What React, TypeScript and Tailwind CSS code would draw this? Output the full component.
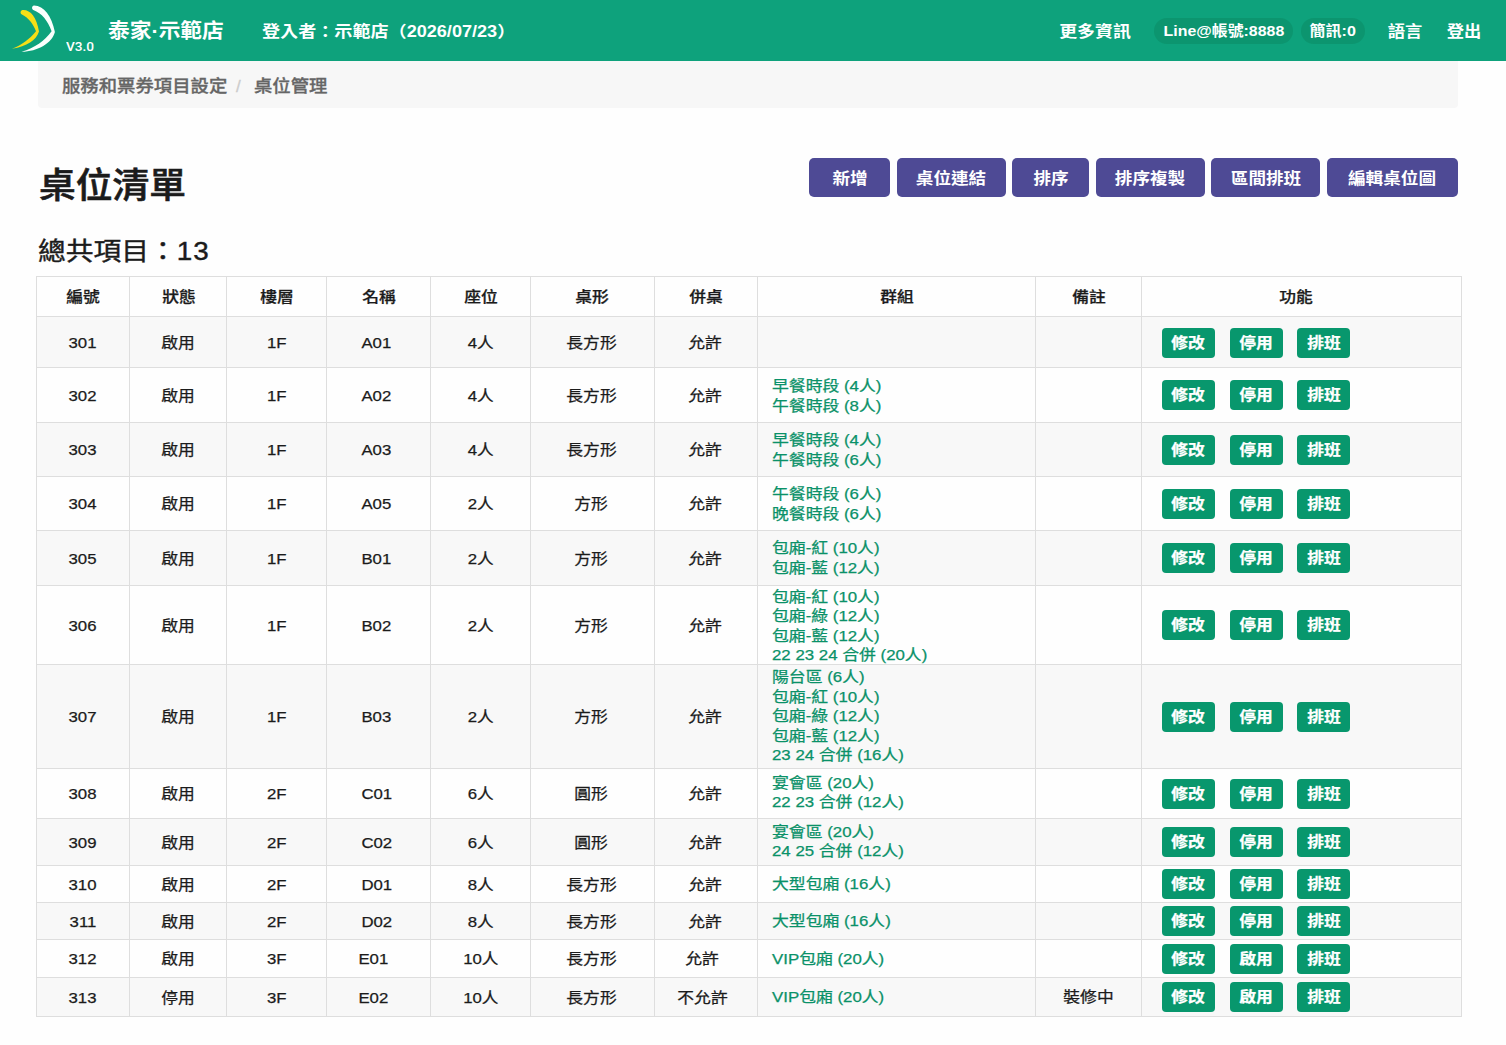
import React from 'react';
import clsx from 'clsx';

interface TableRow {
  id: string;
  status: string;
  floor: string;
  name: string;
  seats: string;
  shape: string;
  merge: string;
  groups: string[];
  note?: string;
  toggle: string;
  height: string;
  leading?: string;
}

const columns = [
  { label: '編號', width: 'w-[93px]' },
  { label: '狀態', width: 'w-[97px] pl-[3px]' },
  { label: '樓層', width: 'w-[100px] pl-0.5' },
  { label: '名稱', width: 'w-[104px] pl-0.5' },
  { label: '座位', width: 'w-[100px] pl-0.5' },
  { label: '桌形', width: 'w-[124px]' },
  { label: '併桌', width: 'w-[103px]' },
  { label: '群組', width: 'w-[278px] pl-0.5' },
  { label: '備註', width: 'w-[106px] pl-0.5' },
  { label: '功能', width: 'w-[320px] pr-2.5' },
];

const rows: TableRow[] = [
  { id: '301', status: '啟用', floor: '1F', name: 'A01', seats: '4人', shape: '長方形', merge: '允許', groups: [], toggle: '停用', height: 'h-[51px]' },
  { id: '302', status: '啟用', floor: '1F', name: 'A02', seats: '4人', shape: '長方形', merge: '允許', groups: ['早餐時段 (4人)', '午餐時段 (8人)'], toggle: '停用', height: 'h-[55px]', leading: 'first:pt-px' },
  { id: '303', status: '啟用', floor: '1F', name: 'A03', seats: '4人', shape: '長方形', merge: '允許', groups: ['早餐時段 (4人)', '午餐時段 (6人)'], toggle: '停用', height: 'h-[54px]' },
  { id: '304', status: '啟用', floor: '1F', name: 'A05', seats: '2人', shape: '方形', merge: '允許', groups: ['午餐時段 (6人)', '晚餐時段 (6人)'], toggle: '停用', height: 'h-[54px]' },
  { id: '305', status: '啟用', floor: '1F', name: 'B01', seats: '2人', shape: '方形', merge: '允許', groups: ['包廂-紅 (10人)', '包廂-藍 (12人)'], toggle: '停用', height: 'h-[55px]' },
  { id: '306', status: '啟用', floor: '1F', name: 'B02', seats: '2人', shape: '方形', merge: '允許', groups: ['包廂-紅 (10人)', '包廂-綠 (12人)', '包廂-藍 (12人)', '22 23 24 合併 (20人)'], toggle: '停用', height: 'h-[79px]', leading: 'leading-[19.3px] first:pt-px' },
  { id: '307', status: '啟用', floor: '1F', name: 'B03', seats: '2人', shape: '方形', merge: '允許', groups: ['陽台區 (6人)', '包廂-紅 (10人)', '包廂-綠 (12人)', '包廂-藍 (12人)', '23 24 合併 (16人)'], toggle: '停用', height: 'h-[104px]', leading: 'leading-[19.5px] last:pb-px' },
  { id: '308', status: '啟用', floor: '2F', name: 'C01', seats: '6人', shape: '圓形', merge: '允許', groups: ['宴會區 (20人)', '22 23 合併 (12人)'], toggle: '停用', height: 'h-[50px]', leading: 'leading-[19.5px] last:pb-[3px]' },
  { id: '309', status: '啟用', floor: '2F', name: 'C02', seats: '6人', shape: '圓形', merge: '允許', groups: ['宴會區 (20人)', '24 25 合併 (12人)'], toggle: '停用', height: 'h-[47px]', leading: 'leading-[19px] last:pb-[3px]' },
  { id: '310', status: '啟用', floor: '2F', name: 'D01', seats: '8人', shape: '長方形', merge: '允許', groups: ['大型包廂 (16人)'], toggle: '停用', height: 'h-[37px]' },
  { id: '311', status: '啟用', floor: '2F', name: 'D02', seats: '8人', shape: '長方形', merge: '允許', groups: ['大型包廂 (16人)'], toggle: '停用', height: 'h-[37px]' },
  { id: '312', status: '啟用', floor: '3F', name: 'E01', seats: '10人', shape: '長方形', merge: '允許', groups: ['VIP包廂 (20人)'], toggle: '啟用', height: 'h-[38px]' },
  { id: '313', status: '停用', floor: '3F', name: 'E02', seats: '10人', shape: '長方形', merge: '不允許', groups: ['VIP包廂 (20人)'], note: '裝修中', toggle: '啟用', height: 'h-[39px]', leading: 'last:pb-px' },
];

const actions = [
  { label: '新增', width: 'w-[81px]' },
  { label: '桌位連結', width: 'w-[109px]' },
  { label: '排序', width: 'w-[77px]' },
  { label: '排序複製', width: 'w-[109px]' },
  { label: '區間排班', width: 'w-[109px]' },
  { label: '編輯桌位圖', width: 'w-[131px]' },
];

// Slightly extended lettering
const Wide: React.FC<{ children?: React.ReactNode; className?: string }> = ({ children, className }) => (
  <span className={clsx('inline-block whitespace-nowrap', className || 'scale-x-[1.117]')}>{children}</span>
);

const Logo = () => (
  <svg className="h-[61px] w-[60px] shrink-0" viewBox="0 1 60 61" fill="none">
    <path
      d="M22.5 10C30.5 9.5 36.5 17 39 31.5C36 40.5 27 46.3 12 48.8C22.5 44.6 29 39.5 36 31.2C33.2 24 28.5 17.5 21.5 14.2C20 13 20.5 10.4 22.5 10Z"
      fill="#f6df16"
    />
    <path
      d="M34 5.6C44 6 51.5 16 54.9 32C52 43 38 51.6 21.5 51.8C35 47.6 44.5 41 51.6 31.2C47.6 20.5 42 13.2 33.3 10C31.4 9 31.8 6 34 5.6Z"
      fill="#fafffc"
    />
  </svg>
);

const Header = () => (
  <header className="flex h-[61px] items-center bg-[#0ea27c] pt-px font-bold text-white">
    <Logo />
    <span className="ml-[6px] mt-[32px] w-[42px] text-[13px] leading-4 font-medium [font-family:Roboto,sans-serif]">
      <Wide className="origin-left scale-x-[1.05]">V3.0</Wide>
    </span>
    <div className="w-[154px] text-[20px] leading-6">
      <Wide className="origin-left scale-x-[1.085]">泰家·示範店</Wide>
    </div>
    <div className="pt-px text-base">
      <Wide className="origin-left scale-x-[1.13]">登入者：示範店（2026/07/23）</Wide>
    </div>
    <nav className="ml-auto flex items-center pr-6 text-base">
      <div className="mr-[23px] flex w-[71px] justify-center pt-px">
        <Wide className="scale-x-[1.12]">更多資訊</Wide>
      </div>
      <div className="mr-2 flex h-[26px] w-[139px] items-center justify-center rounded-full bg-[#0c956f] text-[15px]">
        <Wide className="scale-x-[1.06]">Line@帳號:8888</Wide>
      </div>
      <div className="mr-[23px] flex h-[26px] w-[64px] items-center justify-center rounded-full bg-[#0c956f] text-[15px]">
        <Wide className="scale-x-[1.07]">簡訊:0</Wide>
      </div>
      <div className="mr-6 flex w-[35px] justify-center pt-px">
        <Wide className="scale-x-[1.08]">語言</Wide>
      </div>
      <div className="flex w-[35px] justify-center pt-px">
        <Wide className="scale-x-[1.08]">登出</Wide>
      </div>
    </nav>
  </header>
);

const RowButton: React.FC<{ label: string }> = ({ label }) => (
  <button className="flex h-[30px] w-[53px] items-center justify-center rounded bg-[#08976d] text-[15px] font-bold text-white">
    <Wide>{label}</Wide>
  </button>
);

const App: React.FC = () => (
  <div className="h-[1045px] overflow-hidden bg-[#fefefe] text-[#1b1b1b] [font-family:'Liberation_Sans','Noto_Sans_CJK_TC',sans-serif]">
    <Header />

    <div className="mr-12 ml-[38px] flex h-[47px] items-center rounded-b bg-[#f7f7f7] pt-[5px] pl-6 text-[17px] font-medium text-[#666] [-webkit-text-stroke:0.3px]">
      <Wide className="w-[154px] origin-left scale-x-[1.08]">服務和票券項目設定</Wide>
      <span className="ml-[20px] w-[18px] text-[#ccc]">/</span>
      <Wide className="origin-left scale-x-[1.08]">桌位管理</Wide>
    </div>

    <div className="mr-12 ml-[39px] flex h-[90px] items-start justify-between pt-[50px]">
      <h1 className="pt-[8px] text-[35px] leading-10 font-medium [-webkit-text-stroke:0.6px]">
        <Wide className="origin-left scale-x-[1.05]">桌位清單</Wide>
      </h1>
      <div className="flex gap-[6.6px] text-base font-bold text-white">
        {actions.map((action) => (
          <button
            key={action.label}
            className={clsx('flex h-[39px] items-center justify-center rounded-[5px] bg-[#4e4a95] pt-0.5', action.width)}
          >
            <Wide className="scale-x-[1.1]">{action.label}</Wide>
          </button>
        ))}
      </div>
    </div>

    <h2 className="ml-[38px] flex h-[78px] items-center pt-[29px] text-[25px] [-webkit-text-stroke:0.4px]">
      <Wide className="origin-left scale-x-[1.11]">
        總共項目：<span className="tracking-[1px]">13</span>
      </Wide>
    </h2>

    <table className="ml-9 w-[1426px] table-fixed border-collapse text-[15px] leading-5 [-webkit-text-stroke:0.25px]">
      <thead>
        <tr className="h-10">
          {columns.map((col) => (
            <th key={col.label} className={clsx('border border-[#dedede] py-0 text-center font-medium', col.width)}>
              <Wide>{col.label}</Wide>
            </th>
          ))}
        </tr>
      </thead>
      <tbody>
        {rows.map((row) => (
          <tr key={row.id} className={clsx('odd:bg-[#f8f8f8]', row.height)}>
            {[row.id, row.status, row.floor].map((cell) => (
              <td key={cell} className="border border-[#dedede] p-0 pt-px text-center">
                <Wide>{cell}</Wide>
              </td>
            ))}
            <td className={clsx('border border-[#dedede] pt-px text-center', row.floor === '3F' ? 'pr-2.5' : 'pr-1')}>
              <Wide>{row.name}</Wide>
            </td>
            <td className="border border-[#dedede] p-0 pt-px text-center">
              <Wide>{row.seats}</Wide>
            </td>
            <td className="border border-[#dedede] p-0 pt-px pr-0.5 text-center">
              <Wide>{row.shape}</Wide>
            </td>
            <td className={clsx('border border-[#dedede] pt-px text-center', row.floor === '3F' ? 'pr-[7px]' : 'pr-0.5')}>
              <Wide>{row.merge}</Wide>
            </td>
            <td className="border border-[#dedede] py-0 pr-0 pl-3.5 text-[#0a9168]">
              {row.groups.map((group) => (
                <div key={group} className={clsx('flex', row.leading)}>
                  <Wide className="origin-left scale-x-[1.122]">{group}</Wide>
                </div>
              ))}
            </td>
            <td className="border border-[#dedede] p-0 text-center">
              <Wide>{row.note}</Wide>
            </td>
            <td className="border border-[#dedede] py-0 pr-0 pl-5">
              <div className={clsx('flex gap-[14.6px]', row.groups.length === 0 && 'pt-0.5')}>
                <RowButton label="修改" />
                <RowButton label={row.toggle} />
                <RowButton label="排班" />
              </div>
            </td>
          </tr>
        ))}
      </tbody>
    </table>
  </div>
);

export default App;
